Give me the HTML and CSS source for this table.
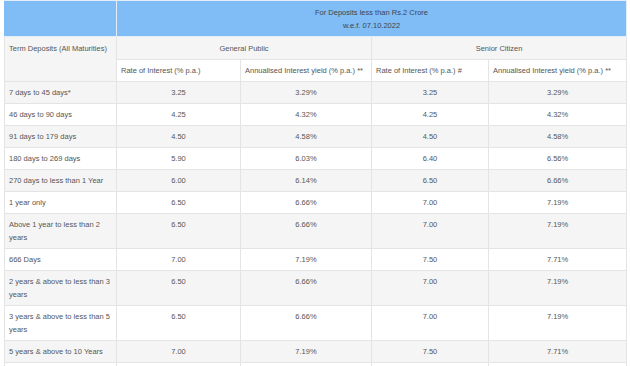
FILE: index.html
```html
<!DOCTYPE html>
<html>
<head>
<meta charset="utf-8">
<link rel="stylesheet" href="styles.css">
</head>
<body>
<div class="wrap">
<table class="rates">
  <colgroup>
    <col class="c1"><col class="c2"><col class="c3"><col class="c4"><col class="c5">
  </colgroup>
  <thead>
    <tr class="blue">
      <th></th>
      <th colspan="4" class="center">For Deposits less than Rs.2 Crore<br>w.e.f. 07.10.2022</th>
    </tr>
    <tr class="grp">
      <th rowspan="2" class="left">Term Deposits (All Maturities)</th>
      <th colspan="2" class="center">General Public</th>
      <th colspan="2" class="center">Senior Citizen</th>
    </tr>
    <tr class="sub">
      <th class="left">Rate of Interest (% p.a.)</th>
      <th class="left">Annualised Interest yield (% p.a.) **</th>
      <th class="left">Rate of Interest (% p.a.) #</th>
      <th class="left">Annualised Interest yield (% p.a.) **</th>
    </tr>
  </thead>
  <tbody>
    <tr><td>7 days to 45 days*</td><td>3.25</td><td>3.29%</td><td>3.25</td><td>3.29%</td></tr>
    <tr><td>46 days to 90 days</td><td>4.25</td><td>4.32%</td><td>4.25</td><td>4.32%</td></tr>
    <tr><td>91 days to 179 days</td><td>4.50</td><td>4.58%</td><td>4.50</td><td>4.58%</td></tr>
    <tr><td>180 days to 269 days</td><td>5.90</td><td>6.03%</td><td>6.40</td><td>6.56%</td></tr>
    <tr><td>270 days to less than 1 Year</td><td>6.00</td><td>6.14%</td><td>6.50</td><td>6.66%</td></tr>
    <tr><td>1 year only</td><td>6.50</td><td>6.66%</td><td>7.00</td><td>7.19%</td></tr>
    <tr><td>Above 1 year to less than 2 years</td><td>6.50</td><td>6.66%</td><td>7.00</td><td>7.19%</td></tr>
    <tr><td>666 Days</td><td>7.00</td><td>7.19%</td><td>7.50</td><td>7.71%</td></tr>
    <tr><td>2 years &amp; above to less than 3 years</td><td>6.50</td><td>6.66%</td><td>7.00</td><td>7.19%</td></tr>
    <tr><td>3 years &amp; above to less than 5 years</td><td>6.50</td><td>6.66%</td><td>7.00</td><td>7.19%</td></tr>
    <tr><td>5 years &amp; above to 10 Years</td><td>7.00</td><td>7.19%</td><td>7.50</td><td>7.71%</td></tr>
    <tr class="empty"><td></td><td></td><td></td><td></td><td></td></tr>
  </tbody>
</table>
</div>
</body>
</html>
```
FILE: styles.css
```css
html, body {
  margin: 0;
  padding: 0;
  background: #ffffff;
}
.wrap {
  padding: 0 5px 0 4px;
}
.rates {
  width: 622px;
  table-layout: fixed;
  border-collapse: collapse;
  font-family: "Liberation Sans", Arial, sans-serif;
  font-size: 7.5px;
  line-height: 13px;
  color: #555555;
}
.c1 { width: 112px; }
.c2 { width: 124px; }
.c3 { width: 131px; }
.c4 { width: 117px; }
.c5 { width: 138px; }

.rates th, .rates td {
  border: 1px solid #e4e4e4;
  padding: 4px 4px 4px 4px;
  vertical-align: top;
  font-weight: normal;
  text-align: center;
}
.rates th.left { text-align: left; }
.rates td:first-child { text-align: left; }

.blue th {
  background: #80bcf5;
  color: #3c4650;
  border-color: #e3eef9;
  padding: 5px 4px 4px 4px;
  line-height: 13px;
}
.blue th:first-child { border-left-color: #80bcf5; }
.grp th {
  background: #f5f5f5;
  padding-top: 5px;
}
.sub th {
  background: #ffffff;
}
.rates tbody tr:nth-child(odd) td {
  background: #f5f5f5;
}
.rates tbody tr:nth-child(even) td {
  background: #ffffff;
}
.rates tr.empty td {
  height: 13px;
}
```
